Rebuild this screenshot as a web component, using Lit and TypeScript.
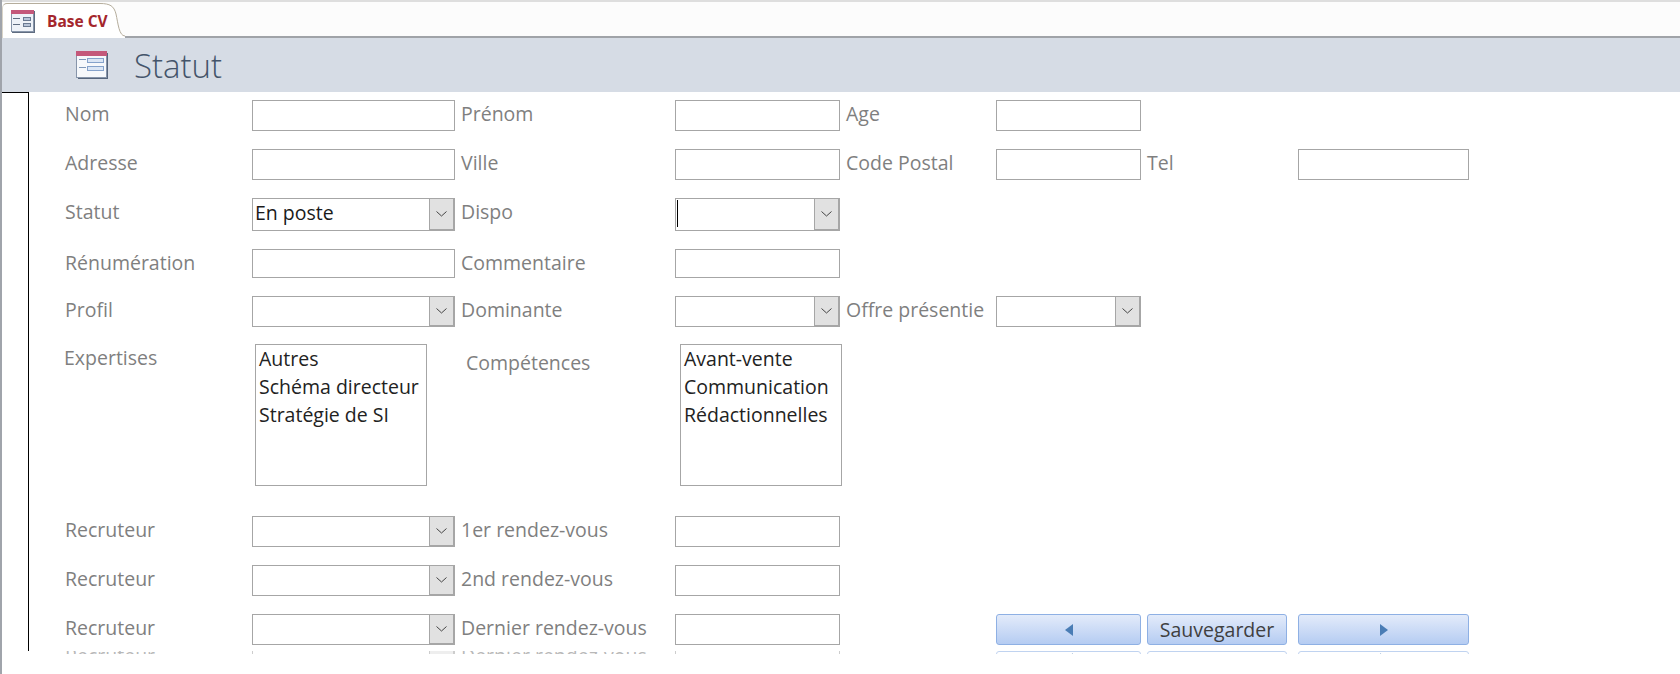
import { LitElement, html, css } from "lit";
import { customElement } from "lit/decorators.js";

const chevron = html`<svg width="11" height="6" viewBox="0 0 11 6"><path d="M0.5 0.5 L5.5 5 L10.5 0.5" fill="none" stroke="#444" stroke-width="1"/></svg>`;

const input = () => html`<div class="field"></div>`;
const combo = (text = "", caret = false) => html`<div class="field combo">
  <div class="value">${caret ? html`<span class="caret"></span>` : text}</div>
  <div class="drop">${chevron}</div>
</div>`;
const label = (t: string, cls = "") => html`<div class="label ${cls}">${t}</div>`;
const list = (items: string[], cls: string) => html`<div class="list ${cls}">${items.map((i) => html`<div>${i}</div>`)}</div>`;
const btn = (inner: unknown, cls = "") => html`<div class="btn ${cls}">${inner}</div>`;
const left = html`<svg width="8" height="12" viewBox="0 0 8 12"><path d="M8 0 L0 6 L8 12Z" fill="#4a7db5"/></svg>`;
const right = html`<svg width="8" height="12" viewBox="0 0 8 12"><path d="M0 0 L8 6 L0 12Z" fill="#4a7db5"/></svg>`;
const sp = html`<i></i>`;

const headerIcon = html`<svg width="32" height="28" viewBox="0 0 32 28">
  <rect x="2" y="2" width="30" height="26" fill="#56657c"/>
  <rect x="0.5" y="0.5" width="30" height="26" fill="#f6f8fb" stroke="#8795aa"/>
  <rect x="0" y="0" width="31" height="5" fill="#c4587a"/>
  <rect x="3" y="8" width="7" height="1" fill="#7f97b8"/>
  <rect x="3" y="16" width="7" height="1" fill="#7f97b8"/>
  <rect x="11.5" y="7.5" width="16" height="4" fill="#dbe6f5" stroke="#85a2cb"/>
  <rect x="11.5" y="15.5" width="16" height="4" fill="#dbe6f5" stroke="#85a2cb"/>
</svg>`;

const tabIcon = html`<svg class="tabicon" width="24" height="23" viewBox="0 0 24 23">
  <rect x="1" y="1" width="23" height="22" fill="#5f6c80"/>
  <rect x="0.5" y="0.5" width="22" height="21" fill="#eef2f8" stroke="#8795aa"/>
  <rect x="0" y="0" width="23" height="4" fill="#c4587a"/>
  <rect x="2" y="8" width="7" height="1" fill="#5f6c80"/>
  <rect x="2" y="14" width="7" height="1" fill="#5f6c80"/>
  <rect x="12.5" y="7.5" width="7" height="3" fill="#b7c4d8" stroke="#6a7a92"/>
  <rect x="12.5" y="13.5" width="7" height="3" fill="#b7c4d8" stroke="#6a7a92"/>
</svg>`;

@customElement("app-root")
export class AppRoot extends LitElement {
  static styles = css`
    :host {
      display: block;
      width: 1680px;
      height: 674px;
      background: #fff;
      overflow: hidden;
      font-family: "Open Sans", "Noto Sans", sans-serif;
    }
    .app {
      height: 674px;
      border-left: 2px solid #a0a4ab;
      box-sizing: border-box;
    }
    .tabbar {
      height: 38px;
      box-sizing: border-box;
      border-top: 2px solid #dedede;
      border-bottom: 2px solid #a0a3a8;
      background: #fcfcfc;
      display: flex;
      align-items: flex-end;
    }
    .tab {
      height: 35px;
      margin-bottom: -2px;
      width: 98px;
      flex: none;
      z-index: 1;
      box-sizing: border-box;
      padding-left: 8px;
      background: #fff;
      border-top: 1px solid #b5ad9c;
      border-left: 1px solid #d9d4c8;
      border-top-left-radius: 5px;
      display: flex;
      align-items: center;
      gap: 12px;
    }
    .tabicon { flex: none; }
    .tab span {
      flex: none;
      font-size: 15.5px;
      font-weight: 700;
      color: #a4262c;
      white-space: nowrap;
    }
    .tabcurve {
      display: block;
      flex: none;
      margin-bottom: -2px;
    }
    .header {
      height: 54px;
      background: #d6dce5;
      display: flex;
      align-items: center;
      padding-left: 74px;
      gap: 26px;
    }
    .header .title {
      font-size: 33px;
      color: #44546a;
      font-weight: 300;
    }
    .body {
      height: 562px;
      overflow: hidden;
      display: flex;
      align-items: flex-start;
    }
    .gutter {
      width: 26px;
      flex: none;
      border-top: 1px solid #000;
      border-right: 1px solid #000;
      height: 558px;
    }
    .form {
      flex: 1;
      padding: 8px 0 0 36px;
    }
    .grid {
      display: grid;
      grid-template-columns: 187px 203px 6px 214px 165px 6px 150px 145px 6px 151px 171px;
      grid-template-rows: 31px 31px 33px 29px 31px 153px 31px 31px 31px;
      row-gap: 18px;
    }
    .grid > * { box-sizing: border-box; }
    .strip {
      height: 3px;
      margin-top: 6px;
      overflow: hidden;
      opacity: 0.55;
    }
    .strip .grid {
      grid-template-rows: 31px;
      margin-top: -9px;
    }
    .strip .btn {
      height: 14px;
      margin-top: 9px;
      align-items: flex-start;
      padding-top: 1px;
      background: #fff;
    }
    .label {
      font-size: 19.5px;
      line-height: 28px;
      color: #7f7f7f;
      white-space: nowrap;
    }
    .label.exp { margin-left: -1px; line-height: 26px; }
    .label.comp { margin-left: 5px; line-height: 36px; }
    .field {
      border: 1px solid #a6a6a6;
      background: #fff;
      height: 100%;
    }
    .combo {
      display: flex;
      font-size: 19.5px;
      color: #1a1a1a;
    }
    .value { flex: 1; padding-left: 2px; line-height: 27px; white-space: nowrap; }
    .drop {
      width: 26px;
      flex: none;
      box-sizing: border-box;
      background: #e1e1e1;
      border: 1px solid #a6a6a6;
      border-right-width: 2px;
      border-bottom-width: 2px;
      margin: -1px -1px -1px 0;
      display: flex;
      align-items: center;
      justify-content: center;
    }
    .caret { display: block; width: 1px; height: 27px; background: #000; margin: 1px 0 0 -1px; }
    .list {
      border: 1px solid #a6a6a6;
      height: 142px;
      margin-top: -1px;
      padding: 0 3px;
      font-size: 19.5px;
      line-height: 28px;
      color: #222;
      white-space: nowrap;
    }
    .list.l1 { margin-left: 3px; width: 172px; }
    .list.l2 { margin-left: 5px; width: 162px; }
    .btn {
      border: 1px solid #8eb0e4;
      border-radius: 3px;
      background: linear-gradient(#e3ebfa, #b5ccf2);
      display: flex;
      align-items: center;
      justify-content: center;
      font-size: 19.5px;
      color: #404040;
      height: 100%;
      overflow: hidden;
    }
    .btn.save { margin-right: 11px; }
  `;

  render() {
    return html`<div class="app">
      <div class="tabbar">
        <div class="tab">${tabIcon}<span>Base CV</span></div>
        <svg class="tabcurve" width="25" height="35" viewBox="0 0 25 35">
          <path d="M0 0 C10 0 14 3 16 11 C18 20 19 33 25 33 V35 H0 Z" fill="#fff"/>
          <path d="M0 0.5 C10 0.5 14 3 16 11 C18 20 19 33 25 33" fill="none" stroke="#b5ad9c"/>
        </svg>
      </div>
      <div class="header">${headerIcon}<div class="title">Statut</div></div>
      <div class="body">
        <div class="gutter"></div>
        <div class="form">
          <div class="grid">
            ${label("Nom")}${input()}${sp}${label("Prénom")}${input()}${sp}${label("Age")}${input()}${sp}${sp}${sp}
            ${label("Adresse")}${input()}${sp}${label("Ville")}${input()}${sp}${label("Code Postal")}${input()}${sp}${label("Tel")}${input()}
            ${label("Statut")}${combo("En poste")}${sp}${label("Dispo")}${combo("", true)}${sp}${sp}${sp}${sp}${sp}${sp}
            ${label("Rénumération")}${input()}${sp}${label("Commentaire")}${input()}${sp}${sp}${sp}${sp}${sp}${sp}
            ${label("Profil")}${combo()}${sp}${label("Dominante")}${combo()}${sp}${label("Offre présentie")}${combo()}${sp}${sp}${sp}
            ${label("Expertises", "exp")}${list(["Autres", "Schéma directeur", "Stratégie de SI"], "l1")}${sp}${label("Compétences", "comp")}${list(["Avant-vente", "Communication", "Rédactionnelles"], "l2")}${sp}${sp}${sp}${sp}${sp}${sp}
            ${label("Recruteur")}${combo()}${sp}${label("1er rendez-vous")}${input()}${sp}${sp}${sp}${sp}${sp}${sp}
            ${label("Recruteur")}${combo()}${sp}${label("2nd rendez-vous")}${input()}${sp}${sp}${sp}${sp}${sp}${sp}
            ${label("Recruteur")}${combo()}${sp}${label("Dernier rendez-vous")}${input()}${sp}${sp}${btn(left)}${sp}${btn("Sauvegarder", "save")}${btn(right)}
          </div>
          <div class="strip">
            <div class="grid">
              ${label("Recruteur")}${combo()}${sp}${label("Dernier rendez-vous")}${input()}${sp}${sp}${btn(left)}${sp}${btn("Sauvegarder", "save")}${btn(right)}
            </div>
          </div>
        </div>
      </div>
    </div>`;
  }
}
